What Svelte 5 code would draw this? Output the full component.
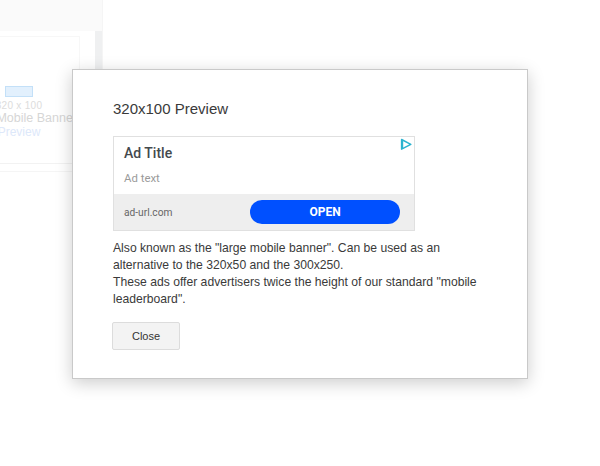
<script lang="ts">
  let open = $state(true)
</script>

<div class="page">
  <aside class="side">
    <div class="top"></div>
    <div class="body">
      <div class="list">
        <div class="card">
          <span class="thumb"></span>
          <span class="size">320 x 100</span>
          <span class="name">Large Mobile Banner</span>
          <span class="link">Preview</span>
        </div>
        <div class="rule"></div>
      </div>
      <div class="scroll"></div>
    </div>
  </aside>

  {#if open}
    <div class="modal">
      <h2>320x100 Preview</h2>
      <div class="ad">
        <svg class="adchoice" width="14" height="13" viewBox="0 0 14 13" fill="none">
          <path d="M2.6 1.5 L11.8 6.3 L2.6 11.2 Z" stroke="#2bb3cf" stroke-width="1.5" stroke-linejoin="round" />
          <path d="M3.2 2.5 V10.2" stroke="#2bb3cf" stroke-width="2" />
        </svg>
        <div class="copy">
          <div class="title">Ad Title</div>
          <div class="text">Ad text</div>
        </div>
        <div class="foot">
          <span class="url">ad-url.com</span>
          <span class="cta">OPEN</span>
        </div>
      </div>
      <p>
        Also known as the "large mobile banner". Can be used as an alternative to the 320x50 and the 300x250.<br />
        These ads offer advertisers twice the height of our standard "mobile leaderboard".
      </p>
      <button onclick={() => (open = false)}>Close</button>
    </div>
  {/if}
</div>

<style>
  :global(body) {
    background: #fff;
    font-family: "Liberation Sans", Arial, sans-serif;
  }
  .page {
    position: relative;
    width: 600px;
    height: 466px;
    overflow: hidden;
  }
  .side {
    width: 102px;
    height: 190px;
    border-right: 1px solid #f5f5f5;
    display: flex;
    flex-direction: column;
  }
  .top {
    height: 31px;
    background: #fafafa;
    flex: none;
  }
  .body {
    flex: 1;
    display: flex;
    min-height: 0;
  }
  .list {
    width: 95px;
    flex: none;
    overflow: hidden;
  }
  .card {
    box-sizing: border-box;
    width: 122px;
    height: 128px;
    margin: 5px 0 0 -42px;
    border: 1px solid #f7f7f7;
    border-bottom-color: #f2f2f2;
    display: flex;
    flex-direction: column;
    align-items: center;
    padding-top: 49px;
  }
  .thumb {
    box-sizing: border-box;
    width: 28px;
    height: 11px;
    background: #e2f0fd;
    border: 1px solid #c3e0f8;
    flex: none;
  }
  .size {
    font-size: 10px;
    line-height: 12px;
    margin-top: 3px;
    color: #dcdcdc;
    letter-spacing: 0.3px;
  }
  .name {
    font-size: 12.5px;
    line-height: 14px;
    margin-top: -1px;
    color: #d6d6d6;
    white-space: nowrap;
  }
  .link {
    font-size: 12px;
    line-height: 14px;
    color: #dde8fa;
  }
  .rule {
    height: 1px;
    margin-top: 7px;
    background: #f5f5f5;
  }
  .scroll {
    width: 7px;
    background: #eff0f1;
  }
  .modal {
    position: absolute;
    left: 72px;
    top: 69px;
    box-sizing: border-box;
    width: 456px;
    height: 310px;
    padding: 30px 40px 0;
    background: #fff;
    border: 1px solid #c9c9c9;
    box-shadow: 0 4px 16px rgba(0, 0, 0, 0.2);
    color: #333;
  }
  h2 {
    margin: 0 0 18px;
    font-size: 15px;
    line-height: 18px;
    font-weight: 400;
    color: #3a3a3a;
  }
  .ad {
    position: relative;
    box-sizing: border-box;
    width: 302px;
    height: 95px;
    border: 1.5px solid #e0e0e0;
    display: flex;
    flex-direction: column;
    font-family: Roboto, sans-serif;
  }
  .adchoice {
    position: absolute;
    top: 1px;
    right: 1px;
  }
  .copy {
    flex: 1;
    padding: 8px 10px 0;
  }
  .title {
    font-size: 14px;
    line-height: 17px;
    font-weight: 500;
    color: #44494d;
  }
  .text {
    margin-top: 9px;
    font-size: 11.4px;
    line-height: 14px;
    color: #9a9a9a;
  }
  .foot {
    height: 36px;
    flex: none;
    box-sizing: border-box;
    background: #eee;
    padding: 0 14px 0 10px;
    display: flex;
    align-items: center;
    justify-content: space-between;
  }
  .url {
    font-size: 10.2px;
    color: #666;
  }
  .cta {
    width: 150px;
    height: 24px;
    border-radius: 12px;
    background: #0050ff;
    color: #fff;
    font-size: 12px;
    font-weight: 700;
    line-height: 24px;
    text-align: center;
  }
  p {
    margin: 9px 0 0;
    font-size: 12.17px;
    line-height: 17px;
    color: #3a3a3a;
  }
  button {
    display: block;
    box-sizing: border-box;
    width: 68px;
    height: 28px;
    margin: 14px 0 0 -1px;
    padding: 0;
    background: #f3f3f3;
    border: 1px solid #dcdcdc;
    border-radius: 2px;
    font-family: inherit;
    font-size: 11px;
    color: #333;
  }
</style>
